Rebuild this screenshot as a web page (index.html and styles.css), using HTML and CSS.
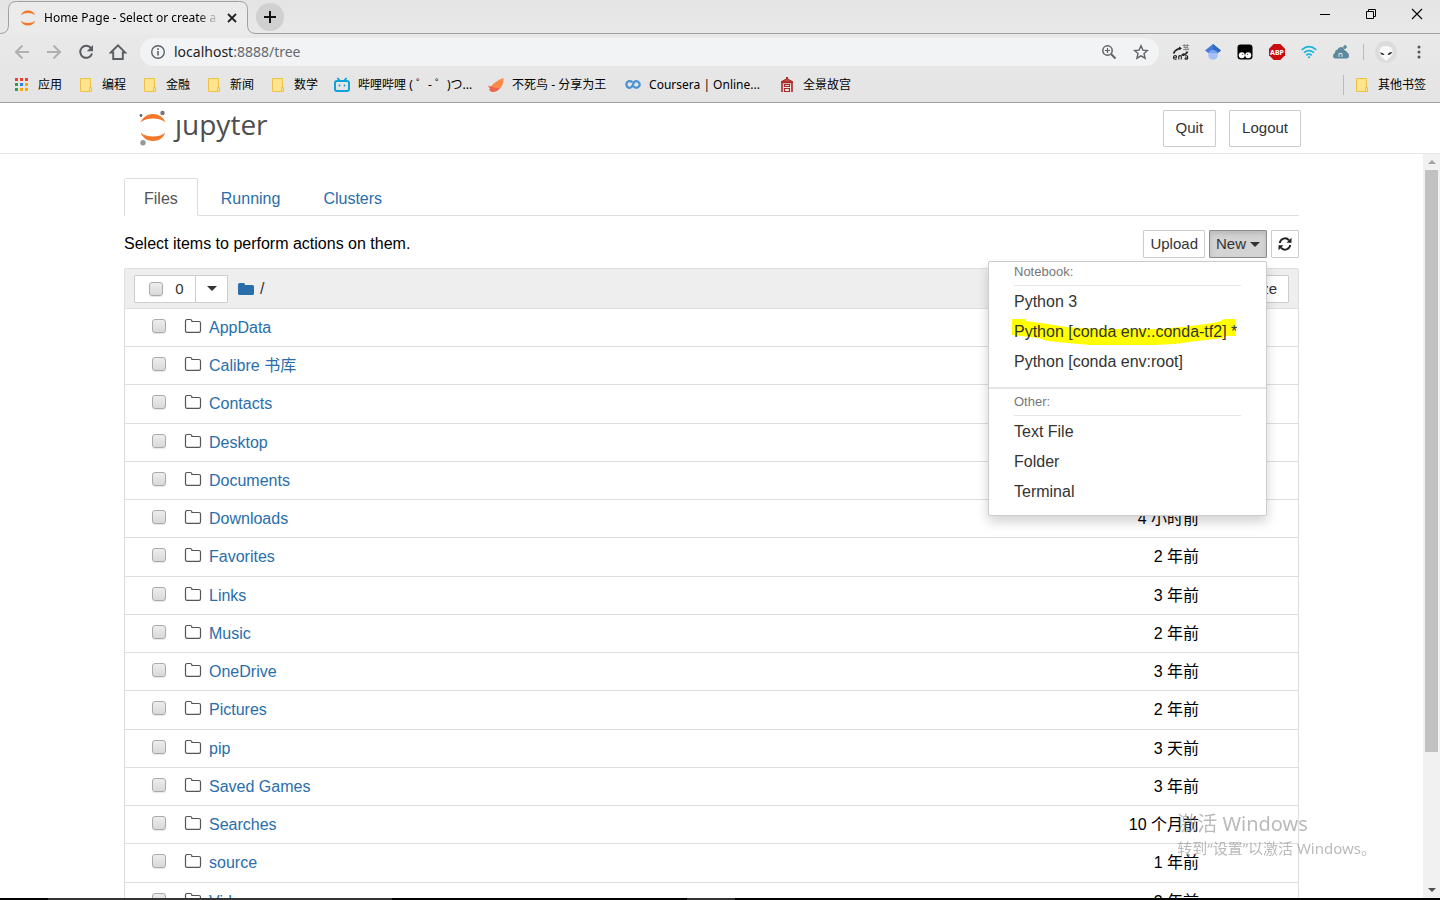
FILE: index.html
```html
<!DOCTYPE html>
<html lang="zh-CN">
<head>
<meta charset="utf-8">
<title>Home Page - Select or create a notebook</title>
<link rel="stylesheet" href="styles.css">
</head>
<body>
<svg class="defs" aria-hidden="true">
  <symbol id="bm-folder" viewBox="0 0 16 16"><path d="M2.500 1.500h10v13h-10z" fill="#ffe48f" stroke="#e9c246"/><path d="M11.500 14.500v-4h2v4z" fill="#ffe48f" stroke="#e9c246"/></symbol>
  <symbol id="folder" viewBox="0 0 18 16"><path d="M1.500 3.200q0-1.700 1.700-1.700h3q1.700 0 1.700 2h7q1.600 0 1.600 1.600v7.600q0 1.600-1.600 1.600h-11.800q-1.600 0-1.600-1.600z" fill="#fff" stroke="#555" stroke-width="1.200"/></symbol>
</svg>
<div class="window">
  <header class="chrome">
    <div class="tabstrip">
      <div class="tab">
        <svg class="tab-shape" width="256" height="33" viewBox="0 0 256 33"><path d="M0 32.500Q8.500 32.500 8.500 24V8.500Q8.500.5 16.500.5h223q8 0 8 8V24q0 8.500 8.500 8.500V33H0z" fill="#ebebeb"/><path d="M0 32.500Q8.500 32.500 8.500 24V8.500Q8.500.5 16.500.5h223q8 0 8 8V24q0 8.500 8.500 8.500" fill="none" stroke="#a0a0a0"/></svg>
        <svg width="16" height="18" viewBox="0 0 16 18"><path d="M.8 6.200Q2.500 1.500 8 1.500t7.200 4.700Q12.500 4 8 4T.8 6.200zM.8 11.800Q2.500 16.500 8 16.500t7.200-4.700Q12.500 14 8 14T.8 11.800z" fill="#f37726"/></svg>
        <span class="tab-title">Home Page - Select or create a</span>
        <button class="tab-close" aria-label="Close tab"><svg width="10" height="10" viewBox="0 0 10 10"><path d="M1 1l8 8M9 1L1 9" stroke="#222" stroke-width="1.800"/></svg></button>
      </div>
      <button class="newtab" aria-label="New tab"><svg width="12" height="12" viewBox="0 0 12 12"><path d="M6 0v12M0 6h12" stroke="#111" stroke-width="2"/></svg></button>
      <div class="wincontrols">
        <button aria-label="Minimize"><svg width="12" height="12" viewBox="0 0 12 12"><path d="M1 6.500h10" stroke="#000"/></svg></button>
        <button aria-label="Restore"><svg width="12" height="12" viewBox="0 0 12 12" fill="none" stroke="#000"><path d="M1.500 3.500h7v7h-7zM3.500 3.500v-2h7v7h-2"/></svg></button>
        <button aria-label="Close"><svg width="12" height="12" viewBox="0 0 12 12"><path d="M1 1l10 10M11 1L1 11" stroke="#000" stroke-width="1.100"/></svg></button>
      </div>
    </div>
    <div class="toolbar">
      <button class="navbtn" aria-label="Back"><svg width="16" height="16" viewBox="0 0 16 16" fill="none" stroke="#b0b0b0" stroke-width="2"><path d="M15 8H2M8.500 1.500L2 8l6.500 6.500"/></svg></button>
      <button class="navbtn" aria-label="Forward"><svg width="16" height="16" viewBox="0 0 16 16" fill="none" stroke="#b0b0b0" stroke-width="2"><path d="M1 8h13M7.500 1.500L14 8l-6.500 6.500"/></svg></button>
      <button class="navbtn" aria-label="Reload"><svg width="16" height="16" viewBox="0 0 16 16"><path d="M13.300 4.600A6 6 0 1 0 14 9.500" fill="none" stroke="#5a5d61" stroke-width="2"/><path d="M15 1v6.200H8.800z" fill="#5a5d61"/></svg></button>
      <button class="navbtn" aria-label="Home"><svg width="18" height="18" viewBox="0 0 18 18"><path d="M1.800 9.500L9 2.300l7.200 7.200H13.800V16H4.200V9.500z" fill="none" stroke="#5a5d61" stroke-width="1.900"/></svg></button>
      <div class="omnibox">
        <svg width="16" height="16" viewBox="0 0 16 16"><circle cx="8" cy="8" r="6.300" fill="none" stroke="#5f6368" stroke-width="1.400"/><path d="M8 7v4.500M8 4.300v1.600" stroke="#5f6368" stroke-width="1.600"/></svg>
        <div class="url" role="textbox" aria-label="Address">localhost<span>:8888/tree</span></div>
        <button aria-label="Zoom"><svg width="16" height="16" viewBox="0 0 16 16" fill="none" stroke="#5f6368"><circle cx="6.500" cy="6.500" r="4.700" stroke-width="1.500"/><path d="M10 10l4.500 4.500" stroke-width="2"/><path d="M4 6.500h5M6.500 4v5" stroke-width="1.200"/></svg></button>
        <button aria-label="Bookmark"><svg width="16" height="16" viewBox="0 0 16 16"><path d="M8 1.800l1.900 4.300 4.600.4-3.500 3.100 1.100 4.600L8 11.800l-4.100 2.400L5 9.600 1.500 6.500l4.600-.4z" fill="none" stroke="#5f6368" stroke-width="1.400"/></svg></button>
      </div>
      <div class="extensions">
        <button aria-label="Translate"><svg width="18" height="18" viewBox="0 0 18 18"><path d="M1.500 10.500Q4 5.500 9 5.500M15.500 8.500q-1 3-5 3.500" fill="none" stroke="#222" stroke-width="1.700"/><path d="M7 3.500l3 2-3.500 1.800zM11.500 10L8.500 12.500l4 .5z" fill="#222"/><path d="M10.500 2.500h6.500M12.300 1v3M15.300 1v3M11.500 4.500h4.500v2M11 6.500h6M13.700 3.500v4" fill="none" stroke="#777" stroke-width=".8"/><path d="M1.500 14.200h3.200q0-1.700-1.600-1.700t-1.700 2q.1 1.700 1.800 1.700.8 0 1.300-.4M6.800 16.500v-4M6.800 13.500q.7-1 1.700-.8.800.2.800 1.300v2.500M13 13q2.600-.8 2.600.8v2.500M15.600 14.500q-2.600 0-2.600 1.100.3 1.300 2.600.2" fill="none" stroke="#222" stroke-width="1.100"/></svg></button>
        <button aria-label="Scholar"><svg width="16" height="16" viewBox="0 0 16 16"><path d="M8 0l8 6.500-4 3H4L0 6.500z" fill="#4579dc"/><path d="M8 0l8 6.500-4 3L8 6z" fill="#356ac3"/><circle cx="8" cy="11" r="4.800" fill="#a2c2f8"/><path d="M3.700 9a4.800 4.800 0 0 1 8.600 0z" fill="#79a6ee"/></svg></button>
        <button aria-label="Userscripts"><svg width="16" height="16" viewBox="0 0 16 16"><rect x=".5" y=".5" width="15" height="15" rx="3" fill="#000"/><circle cx="4.800" cy="11.300" r="3" fill="#fff"/><circle cx="11.200" cy="11.300" r="3" fill="#fff"/><circle cx="5.600" cy="10.300" r=".5"/><circle cx="10.400" cy="10.300" r=".5"/></svg></button>
        <button aria-label="Ad block"><svg width="16" height="16" viewBox="0 0 16 16"><path d="M4.700 0h6.600L16 4.700v6.600L11.300 16H4.700L0 11.300V4.700z" fill="#c70d10"/><text class="abp" x="8" y="10.700" text-anchor="middle" fill="#fff">ABP</text></svg></button>
        <button aria-label="Wireless"><svg width="16" height="16" viewBox="0 0 16 16" fill="none" stroke="#1eb6da" stroke-width="1.700"><path d="M.7 5.800q7.300-6.300 14.600 0M3 8.700q5-4.200 10 0M5.200 11.300q2.800-2.300 5.600 0"/><circle cx="8" cy="13.300" r=".7" fill="#1eb6da" stroke-width="1"/></svg></button>
        <button aria-label="Cloud"><svg width="18" height="16" viewBox="0 0 18 16"><path d="M1 12q0-2.500 2-3-.2-3 2.500-3.500Q6.500 3 9 3q2.500 0 3.500 3l2.500 2q2 1 2 3.500 0 3-2.500 3H3.500Q1 14.500 1 12z" fill="#5c899d"/><path d="M13 1v4M11 3h4" stroke="#5c899d" stroke-width="1.600"/><path d="M7 13V9.500h3V13" fill="none" stroke="#dbe4e8"/></svg></button>
      </div>
      <i class="sep"></i>
      <button class="avatar" aria-label="Profile"><svg width="22" height="22" viewBox="0 0 22 22"><circle cx="11" cy="11" r="11" fill="#dcdcdc"/><path d="M4.500 11Q4 5 11 5t6.500 6q-.5 4-4 6.500L11 20l-2.500-2.500Q5 15 4.500 11z" fill="#fafafa"/><path d="M5 11.500q3.500 0 4.500 2.500-3.500.3-4.500-2.500zM17 11q-3.500 0-4.500 3 4-.3 4.500-3z" fill="#222"/></svg></button>
      <button class="kebab" aria-label="Menu"><svg width="4" height="14" viewBox="0 0 4 14" fill="#555"><circle cx="2" cy="2" r="1.500"/><circle cx="2" cy="7" r="1.500"/><circle cx="2" cy="12" r="1.500"/></svg></button>
    </div>
    <nav class="bookmarks">
      <a href="#"><svg width="16" height="16" viewBox="0 0 16 16"><path d="M1 1h3v3H1zM6 1h3v3H6zM11 1h3v3h-3z" fill="#ea4335"/><path d="M1 6h3v3H1zM1 11h3v3H1z" fill="#2f9e50"/><path d="M6 6h3v3H6z" fill="#2f80ed"/><path d="M11 6h3v3h-3zM6 11h3v3H6zM11 11h3v3h-3z" fill="#f5a80b"/></svg>应用</a>
      <a href="#"><svg width="16" height="16"><use href="#bm-folder"/></svg>编程</a>
      <a href="#"><svg width="16" height="16"><use href="#bm-folder"/></svg>金融</a>
      <a href="#"><svg width="16" height="16"><use href="#bm-folder"/></svg>新闻</a>
      <a href="#"><svg width="16" height="16"><use href="#bm-folder"/></svg>数学</a>
      <a href="#"><svg width="16" height="16" viewBox="0 0 16 16" fill="none" stroke="#11a3d8" stroke-width="2"><rect x="1" y="4" width="14" height="10" rx="2"/><path d="M3.500 1l2 2.500M12.500 1l-2 2.500"/><path d="M5.500 7.500v2M10.500 7.500v2" stroke-width="1.500"/></svg><span class="long">哔哩哔哩 ( ゜- ゜)つ...</span></a>
      <a href="#"><svg width="16" height="16" viewBox="0 0 16 16"><path d="M15.500 1Q16 9 10 13l-6 1.500-2-4Q7 4 15.500 1z" fill="#f78a48"/><path d="M.5 8q1 2 3 1.500Q8 12 12 11q-3 4.500-8 4-1.500-.3-3-2l1-1.500Q0 10 .5 8z" fill="#ed6450"/></svg><span class="mid">不死鸟 - 分享为王</span></a>
      <a href="#"><svg width="16" height="16" viewBox="0 0 16 16" fill="none" stroke="#4b93d3" stroke-width="2.300"><path d="M7.500 5.200Q6.300 4.200 4.700 4.200a3.300 3.300 0 1 0 0 6.600Q7 10.800 8 7.500t3.500-3.300a3.300 3.300 0 1 1-3 5"/></svg><span class="long">Coursera | Online...</span></a>
      <a href="#"><svg width="16" height="18" viewBox="0 0 16 18" fill="none" stroke="#a82b25"><path d="M2 6l6-3.500L14 6z" fill="#bf4b43"/><path d="M8 1v2" stroke-width="2"/><path d="M3 16V6.500h10V16" stroke-width="1.600"/><path d="M5.500 8.500h5v2h-5zM5.500 12.500h5v3h-5z" stroke-width="1.200"/></svg>全景故宫</a>
      <a href="#" class="others"><svg width="16" height="16"><use href="#bm-folder"/></svg>其他书签</a>
    </nav>
  </header>

  <div class="page-head">
    <div class="head-inner">
      <a class="logo" href="#" aria-label="Jupyter">
        <svg width="28" height="36" viewBox="0 0 28 36"><path d="M1.500 12.500Q5 4 14 4t12.500 8.500Q22 8.500 14 8.500T1.500 12.500zM1.500 22.500Q5 31 14 31t12.500-8.500Q22 26.500 14 26.500T1.500 22.500z" fill="#f37726"/><circle cx="23.500" cy="3" r="2.200" fill="#767677"/><circle cx="2" cy="5.500" r="1.400" fill="#616262"/><circle cx="4" cy="32.700" r="2.700" fill="#989798"/></svg>
        <span>ȷupyter</span>
      </a>
      <div class="head-actions"><button class="btn big">Quit</button><button class="btn big">Logout</button></div>
    </div>
  </div>

  <div class="viewport">
    <main>
      <nav class="tabs"><a href="#" class="active">Files</a><a href="#">Running</a><a href="#">Clusters</a></nav>
      <div class="actions">
        <span>Select items to perform actions on them.</span>
        <div class="action-buttons">
          <button class="btn">Upload</button>
          <div class="new-wrap">
            <button class="btn pressed">New<i class="caret"></i></button>
            <div class="menu">
              <section>
                <h2>Notebook:</h2>
                <a href="#">Python 3</a>
                <a href="#" class="marked"><svg class="marker" width="224" height="28" viewBox="0 0 224 28"><path d="M0 1h14v2l22 3 18 3 30 2h60l26-2 24-3 12-2 6-3h11v2h1v15h-13v2l-26 3-22 3-22 1H78l-22-2-20-2-10-3-26-3z" fill="#ffff00"/></svg><span>Python [conda env:.conda-tf2] *</span></a>
                <a href="#">Python [conda env:root]</a>
              </section>
              <section>
                <h2>Other:</h2>
                <a href="#">Text File</a>
                <a href="#">Folder</a>
                <a href="#">Terminal</a>
              </section>
            </div>
          </div>
          <button class="btn" aria-label="Refresh"><svg width="14" height="14" viewBox="0 0 14 14"><path d="M1.800 6A5.200 5.200 0 0 1 11 3.300M12.200 8A5.200 5.200 0 0 1 3 10.700" fill="none" stroke="#222" stroke-width="2"/><path d="M13.500.8v5h-5zM.5 13.200v-5h5z" fill="#222"/></svg></button>
        </div>
      </div>
      <div class="list">
        <div class="list-head">
          <div class="select-group">
            <label class="btn"><input type="checkbox" aria-label="Select all"><span>0</span></label><button class="btn" aria-label="Select options"><i class="caret"></i></button>
          </div>
          <a href="#" aria-label="Root folder"><svg width="16" height="14" viewBox="0 0 16 14"><path d="M0 2.500Q0 1 1.500 1h4Q7 1 7 3h7.500Q16 3 16 4.500v7q0 1.500-1.500 1.500h-13Q0 13 0 11.500z" fill="#296eaa"/></svg></a>
          <span class="slash">/</span>
          <button class="btn size">File size</button>
        </div>
        <table>
          <tbody id="files">
            <tr><td class="check"><input type="checkbox" aria-label="AppData"></td><td class="ico"><svg width="18" height="16"><use href="#folder"/></svg></td><td><a href="#">AppData</a></td><td class="date"></td></tr>
            <tr><td class="check"><input type="checkbox" aria-label="Calibre 书库"></td><td class="ico"><svg width="18" height="16"><use href="#folder"/></svg></td><td><a href="#">Calibre 书库</a></td><td class="date"></td></tr>
            <tr><td class="check"><input type="checkbox" aria-label="Contacts"></td><td class="ico"><svg width="18" height="16"><use href="#folder"/></svg></td><td><a href="#">Contacts</a></td><td class="date"></td></tr>
            <tr><td class="check"><input type="checkbox" aria-label="Desktop"></td><td class="ico"><svg width="18" height="16"><use href="#folder"/></svg></td><td><a href="#">Desktop</a></td><td class="date"></td></tr>
            <tr><td class="check"><input type="checkbox" aria-label="Documents"></td><td class="ico"><svg width="18" height="16"><use href="#folder"/></svg></td><td><a href="#">Documents</a></td><td class="date"></td></tr>
            <tr><td class="check"><input type="checkbox" aria-label="Downloads"></td><td class="ico"><svg width="18" height="16"><use href="#folder"/></svg></td><td><a href="#">Downloads</a></td><td class="date">4 小时前</td></tr>
            <tr><td class="check"><input type="checkbox" aria-label="Favorites"></td><td class="ico"><svg width="18" height="16"><use href="#folder"/></svg></td><td><a href="#">Favorites</a></td><td class="date">2 年前</td></tr>
            <tr><td class="check"><input type="checkbox" aria-label="Links"></td><td class="ico"><svg width="18" height="16"><use href="#folder"/></svg></td><td><a href="#">Links</a></td><td class="date">3 年前</td></tr>
            <tr><td class="check"><input type="checkbox" aria-label="Music"></td><td class="ico"><svg width="18" height="16"><use href="#folder"/></svg></td><td><a href="#">Music</a></td><td class="date">2 年前</td></tr>
            <tr><td class="check"><input type="checkbox" aria-label="OneDrive"></td><td class="ico"><svg width="18" height="16"><use href="#folder"/></svg></td><td><a href="#">OneDrive</a></td><td class="date">3 年前</td></tr>
            <tr><td class="check"><input type="checkbox" aria-label="Pictures"></td><td class="ico"><svg width="18" height="16"><use href="#folder"/></svg></td><td><a href="#">Pictures</a></td><td class="date">2 年前</td></tr>
            <tr><td class="check"><input type="checkbox" aria-label="pip"></td><td class="ico"><svg width="18" height="16"><use href="#folder"/></svg></td><td><a href="#">pip</a></td><td class="date">3 天前</td></tr>
            <tr><td class="check"><input type="checkbox" aria-label="Saved Games"></td><td class="ico"><svg width="18" height="16"><use href="#folder"/></svg></td><td><a href="#">Saved Games</a></td><td class="date">3 年前</td></tr>
            <tr><td class="check"><input type="checkbox" aria-label="Searches"></td><td class="ico"><svg width="18" height="16"><use href="#folder"/></svg></td><td><a href="#">Searches</a></td><td class="date">10 个月前</td></tr>
            <tr><td class="check"><input type="checkbox" aria-label="source"></td><td class="ico"><svg width="18" height="16"><use href="#folder"/></svg></td><td><a href="#">source</a></td><td class="date">1 年前</td></tr>
            <tr><td class="check"><input type="checkbox" aria-label="Videos"></td><td class="ico"><svg width="18" height="16"><use href="#folder"/></svg></td><td><a href="#">Videos</a></td><td class="date">3 年前</td></tr>
          </tbody>
        </table>
      </div>
    </main>
    <div class="scrollbar"><i class="arrow up"></i><i class="thumb"></i><i class="arrow down"></i></div>
  </div>
  <footer class="taskbar"><i class="t1"></i><i class="t2"></i></footer>
</div>
<div class="watermark"><p>激活 Windows</p><p class="small">转到“设置”以激活 Windows。</p></div>
</body>
</html>
```

FILE: styles.css
```css
* { box-sizing: border-box; }
body {
  margin: 0;
  font: 16px/20px "Liberation Sans", Arial, "Noto Sans CJK SC", sans-serif;
  color: #000;
  background: #fff;
}
a { color: #296eaa; text-decoration: none; }
button { font: inherit; color: inherit; background: none; border: 0; padding: 0; }
svg { display: block; flex: none; }
.defs { position: absolute; width: 0; height: 0; }
.window { display: flex; flex-direction: column; height: 100vh; overflow: hidden; }

/* Browser frame */
.chrome {
  flex: none;
  background: linear-gradient(#e4e4e4, #e9e9e9 34px, #e4e4e4);
  border-bottom: 1px solid #a0a0a0;
  font-family: "Noto Sans", "Noto Sans CJK SC", sans-serif;
}
.tabstrip { display: flex; height: 34px; padding-left: 8px; border-bottom: 1px solid #a0a0a0; }
.tab {
  position: relative;
  display: flex;
  align-items: center;
  width: 240px;
  height: 33px;
  margin-top: 1px;
  padding: 0 11px 0 12px;
}
.tab > * { position: relative; }
.tab > .tab-shape { position: absolute; left: -8px; top: 0; }
.tab-title {
  flex: 1;
  min-width: 0;
  margin: 0 8px;
  overflow: hidden;
  white-space: nowrap;
  font-size: 12px;
  -webkit-mask-image: linear-gradient(90deg, #000 88%, transparent);
  mask-image: linear-gradient(90deg, #000 88%, transparent);
}
.newtab {
  display: grid;
  place-items: center;
  width: 28px;
  height: 28px;
  margin: 3px 0 0 8px;
  border-radius: 50%;
  background: #d0d0d0;
}
.wincontrols { display: flex; margin-left: auto; height: 28px; }
.wincontrols button { display: grid; place-items: center; width: 46px; }
.toolbar { display: flex; align-items: center; height: 36px; padding-left: 6px; }
.navbtn { display: grid; place-items: center; width: 32px; height: 28px; }
.omnibox {
  flex: 1;
  display: flex;
  align-items: center;
  gap: 16px;
  height: 28px;
  margin-left: 6px;
  padding: 0 10px;
  border-radius: 14px;
  background: #f1f3f4;
}
.url { flex: 1; margin-left: -8px; font-size: 14px; color: #222; }
.url span { color: #666a6e; }
.extensions { display: flex; padding-left: 6px; }
.extensions button { display: grid; place-items: center; width: 32px; height: 28px; }
.abp { font: bold 7px "Noto Sans", sans-serif; }
.sep { width: 1px; height: 16px; margin: 0 11px 0 6px; background: #bbb; }
.avatar { width: 22px; }
.kebab { display: grid; place-items: center; width: 43px; height: 28px; }
.bookmarks {
  display: flex;
  align-items: center;
  gap: 16px;
  height: 32px;
  padding: 0 14px 3px;
  font-size: 12px;
  white-space: nowrap;
}
.bookmarks a { display: flex; align-items: center; gap: 8px; color: #000; }
.bookmarks .long { width: 114px; }
.bookmarks .mid { width: 97px; }
.bookmarks .others { margin-left: auto; padding-left: 10px; border-left: 1px solid #bbb; }

/* Notebook page header */
.page-head { flex: none; padding: 0 24px; border-bottom: 1px solid #e7e7e7; }
.head-inner { display: flex; align-items: center; justify-content: space-between; max-width: 1162px; height: 50px; margin: 0 auto; }
.logo { display: flex; align-items: center; gap: 8px; color: #4e4e4e; font: 28px/32px "Open Sans", sans-serif; }
.logo span { padding-bottom: 8px; }
.head-actions { display: flex; gap: 13px; }
.btn {
  display: flex;
  align-items: center;
  justify-content: center;
  height: 28px;
  padding: 0 6px;
  border: 1px solid #ccc;
  border-radius: 1px;
  background: #fff;
  color: #333;
  font-size: 15px;
  white-space: nowrap;
}
.btn.big { height: 37px; padding: 0 12px; }
.caret { border: 5px solid transparent; border-top-color: #333; border-bottom: 0; }

/* Scrolling area */
.viewport { flex: 1; min-height: 0; display: flex; overflow: hidden; }
main { flex: 1; max-width: 1175px; margin: 0 auto; padding-top: 24px; }
.tabs { display: flex; gap: 3px; height: 38px; border-bottom: 1px solid #ddd; }
.tabs a { height: 38px; padding: 10px 19px; border: 1px solid transparent; border-radius: 2px 2px 0 0; }
.tabs .active { color: #555; background: #fff; border-color: #ddd #ddd #fff; }
.actions { display: flex; align-items: center; justify-content: space-between; margin: 14px 0 10px; }
.action-buttons { display: flex; gap: 4px; }
.new-wrap { position: relative; }
.pressed { gap: 4px; background: #d4d4d4; border-color: #8c8c8c; box-shadow: inset 0 3px 5px rgba(0, 0, 0, .125); }
.menu {
  position: absolute;
  top: 31px;
  right: 0;
  width: 279px;
  z-index: 5;
  background: #fff;
  border: 1px solid #ccc;
  border-radius: 2px;
  box-shadow: 0 6px 12px rgba(0, 0, 0, .175);
}
.menu section { padding: 0 25px 10px; }
.menu section + section { padding: 3px 25px 8px; border-top: 2px solid #e5e5e5; }
.menu h2 { margin: 0 0 1px; padding-bottom: 3px; border-bottom: 1px solid #e5e5e5; font-size: 13px; font-weight: 400; color: #777; }
.menu a { position: relative; display: block; line-height: 30px; color: #333; white-space: nowrap; }
.marker { position: absolute; left: -2px; top: 1px; }
.marked span { position: relative; }

/* File list */
.list { border: 1px solid #ddd; border-radius: 2px; }
.list-head { display: flex; align-items: center; height: 39px; padding: 0 9px; background: #eee; }
.select-group { display: flex; margin-right: 10px; }
.select-group label { gap: 12px; width: 62px; padding-left: 9px; }
.select-group button { width: 33px; margin-left: -1px; }
.slash { margin-left: 6px; color: #333; }
.size { margin-left: auto; padding: 0 11px; }
input[type="checkbox"] {
  appearance: none;
  display: block;
  width: 14px;
  height: 14px;
  margin: 0;
  border: 1px solid #aaa;
  border-radius: 3px;
  background: linear-gradient(#ededed, #d9d9d9);
  box-shadow: 0 1px 1px rgba(0, 0, 0, .1);
}
table { width: 100%; border-spacing: 0; }
td { height: 38px; padding: 0; border-top: 1px solid #ddd; }
tr:nth-child(4n+3) td { height: 39px; }
.check { width: 59px; padding: 0 0 4px 27px; }
.ico { width: 25px; padding-bottom: 4px; }
.date { padding-right: 99px; text-align: right; }

.scrollbar { display: flex; flex-direction: column; align-items: center; width: 17px; padding: 6px 0; background: #f1f1f1; }
.arrow { border: 4px solid transparent; }
.up { border-bottom-color: #a3a3a3; border-top: 0; margin-bottom: 6px; }
.down { border-top-color: #505050; border-bottom: 0; margin-top: auto; }
.thumb { width: 13px; height: 582px; background: #c1c1c1; }
.taskbar { flex: none; display: flex; height: 2px; background: #000; }
.t1 { width: 344px; margin-left: 48px; background: #333; }
.t2 { width: 48px; margin-left: 295px; background: #333; }

/* Activation notice lies over the whole window */
.watermark {
  position: fixed;
  right: 64px;
  bottom: 40px;
  z-index: 10;
  color: rgba(130, 130, 130, .55);
  font-family: "Noto Sans", "Noto Sans CJK SC", sans-serif;
  pointer-events: none;
}
.watermark p { margin: 0; font-size: 20px; line-height: 24px; }
.watermark .small { font-size: 15px; }
```
